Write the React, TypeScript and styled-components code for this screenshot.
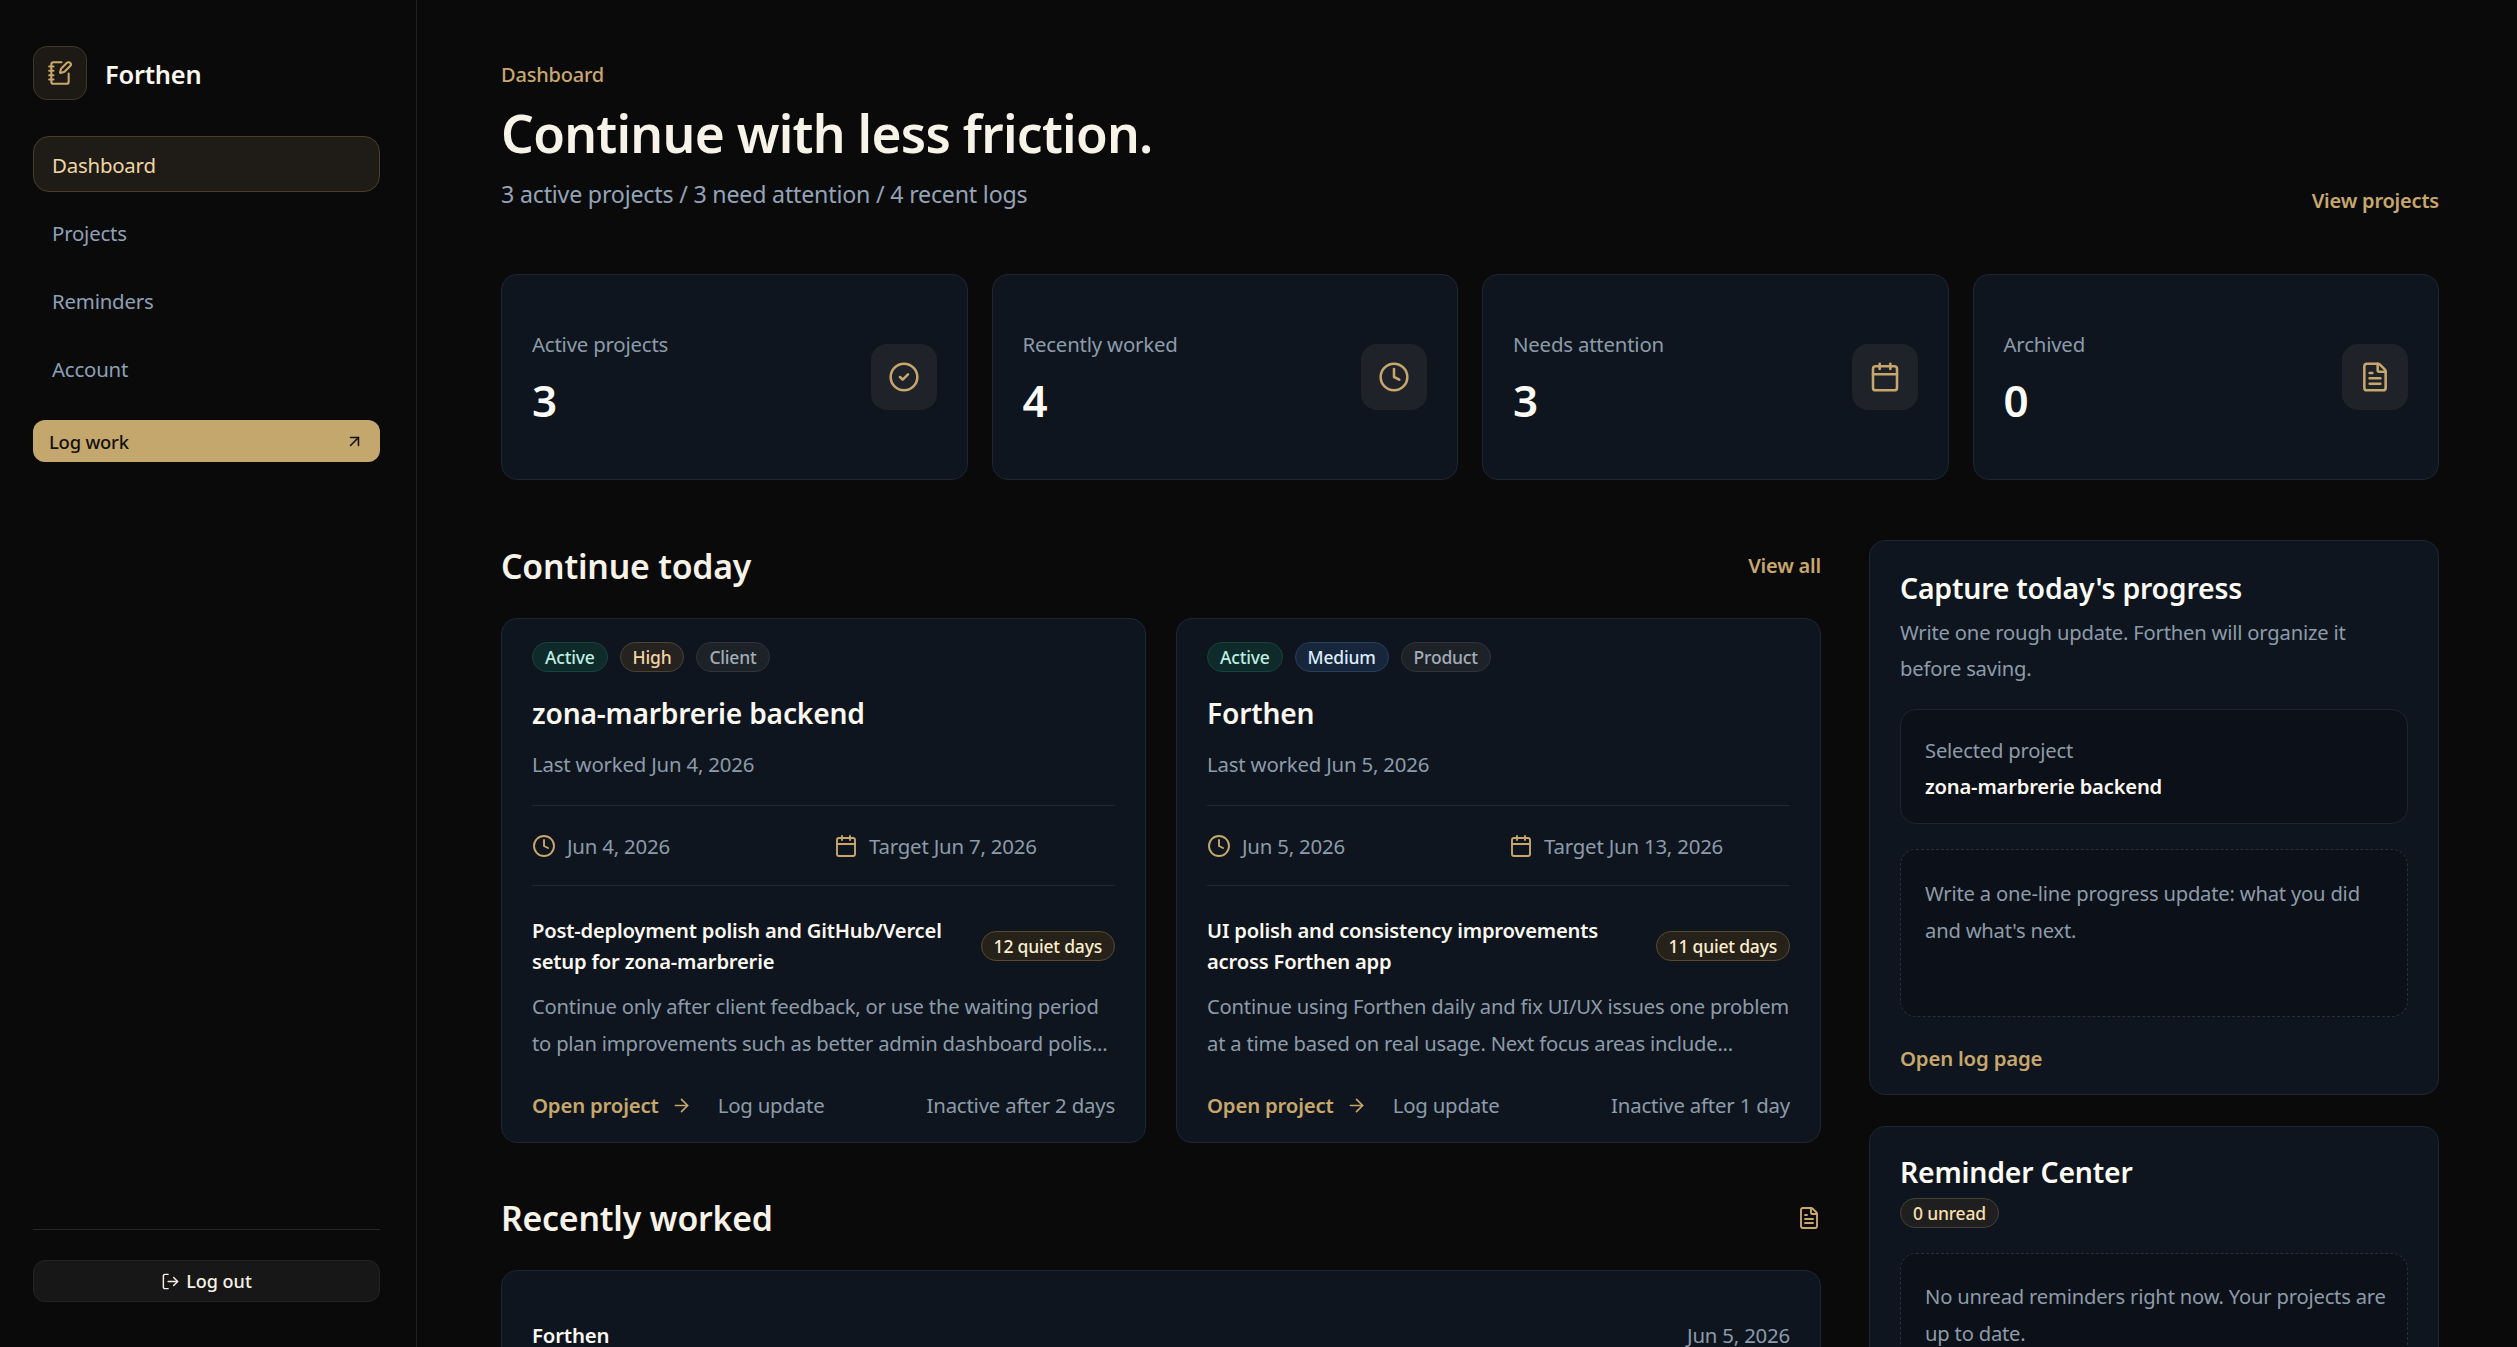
import React from "react";
import styled, {createGlobalStyle} from "styled-components";
import {ArrowRight, ArrowUpRight, Calendar, CircleCheck, Clock, FileText, LogOut, NotebookPen} from "lucide-react";

const gold = "#c7a76c";
const muted = "#8d9ba9";
const cream = "#f7f3e8";

const GlobalStyle = createGlobalStyle`
    * { box-sizing: border-box; }
    html, body { margin: 0; height: 100%; background: #0a0a0b; overflow: hidden; }
    body { font-family: "Noto Sans", "Open Sans", Arial, sans-serif; color: ${cream}; letter-spacing: -0.2px; }
`;

const Shell = styled.div`
    display: flex;
    height: 1347px;
    overflow: hidden;
`;

const Sidebar = styled.aside`
    flex: 0 0 417px;
    display: flex;
    flex-direction: column;
    padding: 46px 36px 45px 33px;
    border-right: 1px solid #1c2029;
`;

const Brand = styled.div`
    display: flex;
    align-items: center;
    gap: 18px;
    margin-bottom: 36px;
`;

const BrandMark = styled.div`
    width: 54px;
    height: 54px;
    display: grid;
    place-items: center;
    border-radius: 14px;
    background: #1d1a15;
    border: 1px solid #3f382b;
    color: ${gold};
`;

const BrandName = styled.span`
    padding-top: 2px;
    font-size: 25.4px;
    font-weight: 600;
    color: #fbf8f0;
`;

const Nav = styled.nav`
    display: flex;
    flex-direction: column;
    gap: 12px;
`;

const NavItem = styled.a<{ $active?: boolean }>`
    height: 56px;
    display: flex;
    align-items: center;
    padding: 2px 18px 0;
    font-size: 20.4px;
    border-radius: 16px;
    border: 1px solid ${({$active}) => $active ? "#4a3f2d" : "transparent"};
    background: ${({$active}) => $active ? "#1f1b16" : "transparent"};
    color: ${({$active}) => $active ? "#efd6a4" : "#8ea0b5"};
`;

const LogWork = styled.a`
    height: 42px;
    margin-top: 24px;
    display: flex;
    align-items: center;
    justify-content: space-between;
    padding: 0 16px;
    border-radius: 12px;
    background: #c4a76c;
    color: #14110c;
    font-size: 18.4px;
    font-weight: 500;
`;

const SidebarFoot = styled.div`
    margin-top: auto;
    padding-top: 30px;
    border-top: 1px solid #24262b;
`;

const LogoutButton = styled.button`
    width: 100%;
    height: 42px;
    display: flex;
    align-items: center;
    justify-content: center;
    gap: 6px;
    border-radius: 12px;
    border: 1px solid #232427;
    background: #171717;
    color: #f6f1e4;
    font: 500 18px "Noto Sans", sans-serif;
`;

const Main = styled.main`
    flex: 1;
    min-width: 0;
    padding: 62px 78px 0 84px;
`;

const PageHead = styled.header`
    display: flex;
    align-items: flex-end;
    justify-content: space-between;
    margin-bottom: 58px;
`;

const Eyebrow = styled.div`
    font-size: 20px;
    line-height: 26px;
    font-weight: 500;
    color: ${gold};
`;

const PageTitle = styled.h1`
    margin: 13px 0 9px;
    font-size: 51.5px;
    line-height: 64px;
    font-weight: 600;
    letter-spacing: -0.72px;
    color: ${cream};
`;

const PageSub = styled.p`
    margin: 0 0 2px;
    font-size: 23.2px;
    line-height: 40px;
    color: #94a3b8;
`;

const GoldLink = styled.a`
    font-size: 20px;
    line-height: 30px;
    font-weight: 600;
    color: ${gold};
`;

const StatGrid = styled.section`
    display: grid;
    grid-template-columns: repeat(4, 1fr);
    gap: 24px;
    margin-bottom: 60px;
`;

const StatCard = styled.div`
    height: 206px;
    display: flex;
    align-items: center;
    justify-content: space-between;
    padding: 0 30px;
    background: #0e151f;
    border: 1px solid #1f2633;
    border-radius: 16px;
`;

const StatText = styled.div`
    padding-top: 1px;
`;

const StatLabel = styled.div`
    font-size: 20.4px;
    line-height: 30px;
    color: ${muted};
`;

const StatValue = styled.div`
    margin-top: 15px;
    font-size: 44px;
    line-height: 52px;
    font-weight: 600;
    color: #fdfbf5;
`;

const StatIcon = styled.div`
    width: 66px;
    height: 66px;
    display: grid;
    place-items: center;
    border-radius: 16px;
    background: #1f2329;
    color: ${gold};
`;

const Columns = styled.div`
    display: grid;
    grid-template-columns: minmax(0, 1fr) 570px;
    gap: 48px;
    align-items: start;
`;

const SectionHead = styled.div`
    height: 50px;
    display: flex;
    align-items: center;
    justify-content: space-between;
    padding-top: 2px;
    margin-bottom: 28px;
    color: ${gold};
`;

const SectionTitle = styled.h2`
    margin: 0;
    font-size: 33.8px;
    font-weight: 600;
    color: ${cream};
`;

const ProjectGrid = styled.div`
    display: grid;
    grid-template-columns: 1fr 1fr;
    gap: 30px;
    margin-bottom: 49px;
`;

const Panel = styled.div`
    background: #0e151f;
    border: 1px solid #1f2633;
    border-radius: 16px;
`;

const ProjectCard = styled(Panel)`
    height: 525px;
    padding: 23px 30px 21px;
`;

const BadgeRow = styled.div`
    display: flex;
    gap: 12px;
`;

const tones = {
    active: {bg: "#0f2a2a", border: "#174440", color: "#bdeee0"},
    high: {bg: "#25221f", border: "#4b4234", color: "#f3d4a4"},
    medium: {bg: "#17263a", border: "#25405f", color: "#dcecff"},
    kind: {bg: "#1d2229", border: "#30353c", color: "#a2adb8"},
    quiet: {bg: "#272219", border: "#5a4a2e", color: "#fbeed0"},
    unread: {bg: "#201f1f", border: "#45403a", color: "#f6dfae"},
};

const Badge = styled.span<{ $tone: keyof typeof tones }>`
    height: 30px;
    display: inline-flex;
    align-items: center;
    padding: 0 12px;
    flex: none;
    border-radius: 15px;
    font-size: 17.5px;
    font-weight: 500;
    white-space: nowrap;
    background: ${({$tone}) => tones[$tone].bg};
    border: 1px solid ${({$tone}) => tones[$tone].border};
    color: ${({$tone}) => tones[$tone].color};
`;

const ProjectName = styled.h3`
    margin: 20px 0 15px;
    font-size: 28.2px;
    line-height: 42px;
    font-weight: 600;
    color: #fbf8f0;
`;

const Muted = styled.div`
    font-size: 20.4px;
    line-height: 30px;
    color: ${muted};
`;

const MetaRow = styled.div`
    display: grid;
    grid-template-columns: 1fr 1fr;
    gap: 21px;
    height: 81px;
    margin-top: 26px;
    border-top: 1px solid #222833;
    border-bottom: 1px solid #222833;
`;

const MetaItem = styled.div`
    display: flex;
    align-items: center;
    gap: 11px;
    font-size: 20.4px;
    color: ${muted};

    svg {
        color: ${gold};
        flex: none;
    }
`;

const LogHead = styled.div`
    display: flex;
    align-items: center;
    justify-content: space-between;
    gap: 20px;
    margin-top: 29px;
`;

const LogTitle = styled.div`
    font-size: 20.2px;
    line-height: 30.5px;
    font-weight: 600;
    color: #fbf8f0;
`;

const LogBody = styled.p`
    margin: 12px 0 0;
    font-size: 20.2px;
    line-height: 36.5px;
    color: ${muted};
`;

const CardFoot = styled.div`
    display: flex;
    align-items: center;
    margin-top: 29px;
    font-size: 20.4px;
    line-height: 30px;
    color: ${muted};
`;

const OpenLink = styled.a`
    display: flex;
    align-items: center;
    gap: 12px;
    margin-right: 26px;
    font-weight: 600;
    color: ${gold};
`;

const FootNote = styled.span`
    margin-left: auto;
`;

const RecentCard = styled(Panel)`
    padding: 49px 30px 30px;
    display: flex;
    justify-content: space-between;
    font-size: 20.4px;
    line-height: 30px;
    color: ${muted};
`;

const RecentName = styled.span`
    font-weight: 600;
    color: #fbf8f0;
`;

const SideColumn = styled.div`
    display: flex;
    flex-direction: column;
    gap: 31px;
`;

const SidePanel = styled(Panel)`
    padding: 26px 30px 21px;
`;

const SideTitle = styled.h3`
    margin: 0;
    font-size: 28.4px;
    line-height: 42px;
    font-weight: 600;
    color: #fdfbf5;
`;

const SideText = styled.p`
    margin: 5px 0 0;
    font-size: 20.2px;
    line-height: 36px;
    color: ${muted};
`;

const SelectedBox = styled.div`
    height: 115px;
    margin-top: 23px;
    padding: 22px 24px;
    background: #0c1018;
    border: 1px solid #1f2530;
    border-radius: 16px;
    font-size: 20.2px;
    line-height: 36px;
    color: ${muted};
`;

const SelectedName = styled.div`
    font-weight: 600;
    color: #fbf8f0;
`;

const DashedBox = styled.div`
    margin-top: 25px;
    padding: 25px 24px;
    background: #0c1018;
    border: 1px dashed #2a303a;
    border-radius: 16px;
    font-size: 20.2px;
    line-height: 36.5px;
    color: ${muted};
`;

const TextareaBox = styled(DashedBox)`
    height: 168px;
`;

const ReminderBox = styled(DashedBox)`
    padding: 24px 10px 24px 24px;
`;

const LogPageLink = styled.a`
    display: block;
    margin-top: 26px;
    font-size: 20.4px;
    line-height: 30px;
    font-weight: 600;
    color: ${gold};
`;

const UnreadRow = styled.div`
    margin-top: 5px;
`;

const ReminderTitle = styled(SideTitle)`
    margin-top: -2px;
`;

const stats = [
    {label: "Active projects", value: "3", Icon: CircleCheck},
    {label: "Recently worked", value: "4", Icon: Clock},
    {label: "Needs attention", value: "3", Icon: Calendar},
    {label: "Archived", value: "0", Icon: FileText},
];

const projects = [
    {
        priority: "High",
        tone: "high" as const,
        kind: "Client",
        name: "zona-marbrerie backend",
        date: "Jun 4, 2026",
        target: "Target Jun 7, 2026",
        log: "Post-deployment polish and GitHub/Vercel setup for zona-marbrerie",
        quiet: "12 quiet days",
        body: "Continue only after client feedback, or use the waiting period to plan improvements such as better admin dashboard polis...",
        inactive: "Inactive after 2 days",
    },
    {
        priority: "Medium",
        tone: "medium" as const,
        kind: "Product",
        name: "Forthen",
        date: "Jun 5, 2026",
        target: "Target Jun 13, 2026",
        log: "UI polish and consistency improvements across Forthen app",
        quiet: "11 quiet days",
        body: "Continue using Forthen daily and fix UI/UX issues one problem at a time based on real usage. Next focus areas include...",
        inactive: "Inactive after 1 day",
    },
];

function ProjectPanel({project}: { project: typeof projects[number] }): React.JSX.Element {
    return (
        <ProjectCard>
            <BadgeRow>
                <Badge $tone="active">Active</Badge>
                <Badge $tone={project.tone}>{project.priority}</Badge>
                <Badge $tone="kind">{project.kind}</Badge>
            </BadgeRow>
            <ProjectName>{project.name}</ProjectName>
            <Muted>Last worked {project.date}</Muted>
            <MetaRow>
                <MetaItem><Clock size={24} strokeWidth={1.9}/>{project.date}</MetaItem>
                <MetaItem><Calendar size={24} strokeWidth={1.9}/>{project.target}</MetaItem>
            </MetaRow>
            <LogHead>
                <LogTitle>{project.log}</LogTitle>
                <Badge $tone="quiet">{project.quiet}</Badge>
            </LogHead>
            <LogBody>{project.body}</LogBody>
            <CardFoot>
                <OpenLink>Open project <ArrowRight size={21} strokeWidth={1.9}/></OpenLink>
                <span>Log update</span>
                <FootNote>{project.inactive}</FootNote>
            </CardFoot>
        </ProjectCard>
    );
}

export default function App(): React.JSX.Element {
    return (
        <Shell>
            <GlobalStyle/>
            <Sidebar>
                <Brand>
                    <BrandMark><NotebookPen size={26} strokeWidth={1.9}/></BrandMark>
                    <BrandName>Forthen</BrandName>
                </Brand>
                <Nav>
                    <NavItem $active>Dashboard</NavItem>
                    <NavItem>Projects</NavItem>
                    <NavItem>Reminders</NavItem>
                    <NavItem>Account</NavItem>
                </Nav>
                <LogWork>Log work <ArrowUpRight size={19} strokeWidth={2}/></LogWork>
                <SidebarFoot>
                    <LogoutButton><LogOut size={19} strokeWidth={1.8}/> Log out</LogoutButton>
                </SidebarFoot>
            </Sidebar>
            <Main>
                <PageHead>
                    <div>
                        <Eyebrow>Dashboard</Eyebrow>
                        <PageTitle>Continue with less friction.</PageTitle>
                        <PageSub>3 active projects / 3 need attention / 4 recent logs</PageSub>
                    </div>
                    <GoldLink>View projects</GoldLink>
                </PageHead>
                <StatGrid>
                    {stats.map(({label, value, Icon}) => (
                        <StatCard key={label}>
                            <StatText>
                                <StatLabel>{label}</StatLabel>
                                <StatValue>{value}</StatValue>
                            </StatText>
                            <StatIcon><Icon size={32} strokeWidth={1.9}/></StatIcon>
                        </StatCard>
                    ))}
                </StatGrid>
                <Columns>
                    <div>
                        <SectionHead>
                            <SectionTitle>Continue today</SectionTitle>
                            <GoldLink>View all</GoldLink>
                        </SectionHead>
                        <ProjectGrid>
                            {projects.map((project) => <ProjectPanel key={project.name} project={project}/>)}
                        </ProjectGrid>
                        <SectionHead>
                            <SectionTitle>Recently worked</SectionTitle>
                            <FileText size={24} strokeWidth={1.9}/>
                        </SectionHead>
                        <RecentCard>
                            <RecentName>Forthen</RecentName>
                            <span>Jun 5, 2026</span>
                        </RecentCard>
                    </div>
                    <SideColumn>
                        <SidePanel>
                            <SideTitle>Capture today's progress</SideTitle>
                            <SideText>Write one rough update. Forthen will organize it before saving.</SideText>
                            <SelectedBox>
                                Selected project
                                <SelectedName>zona-marbrerie backend</SelectedName>
                            </SelectedBox>
                            <TextareaBox>Write a one-line progress update: what you did and what's next.</TextareaBox>
                            <LogPageLink>Open log page</LogPageLink>
                        </SidePanel>
                        <SidePanel>
                            <ReminderTitle>Reminder Center</ReminderTitle>
                            <UnreadRow><Badge $tone="unread">0 unread</Badge></UnreadRow>
                            <ReminderBox>No unread reminders right now. Your projects are up to date.</ReminderBox>
                        </SidePanel>
                    </SideColumn>
                </Columns>
            </Main>
        </Shell>
    );
}
